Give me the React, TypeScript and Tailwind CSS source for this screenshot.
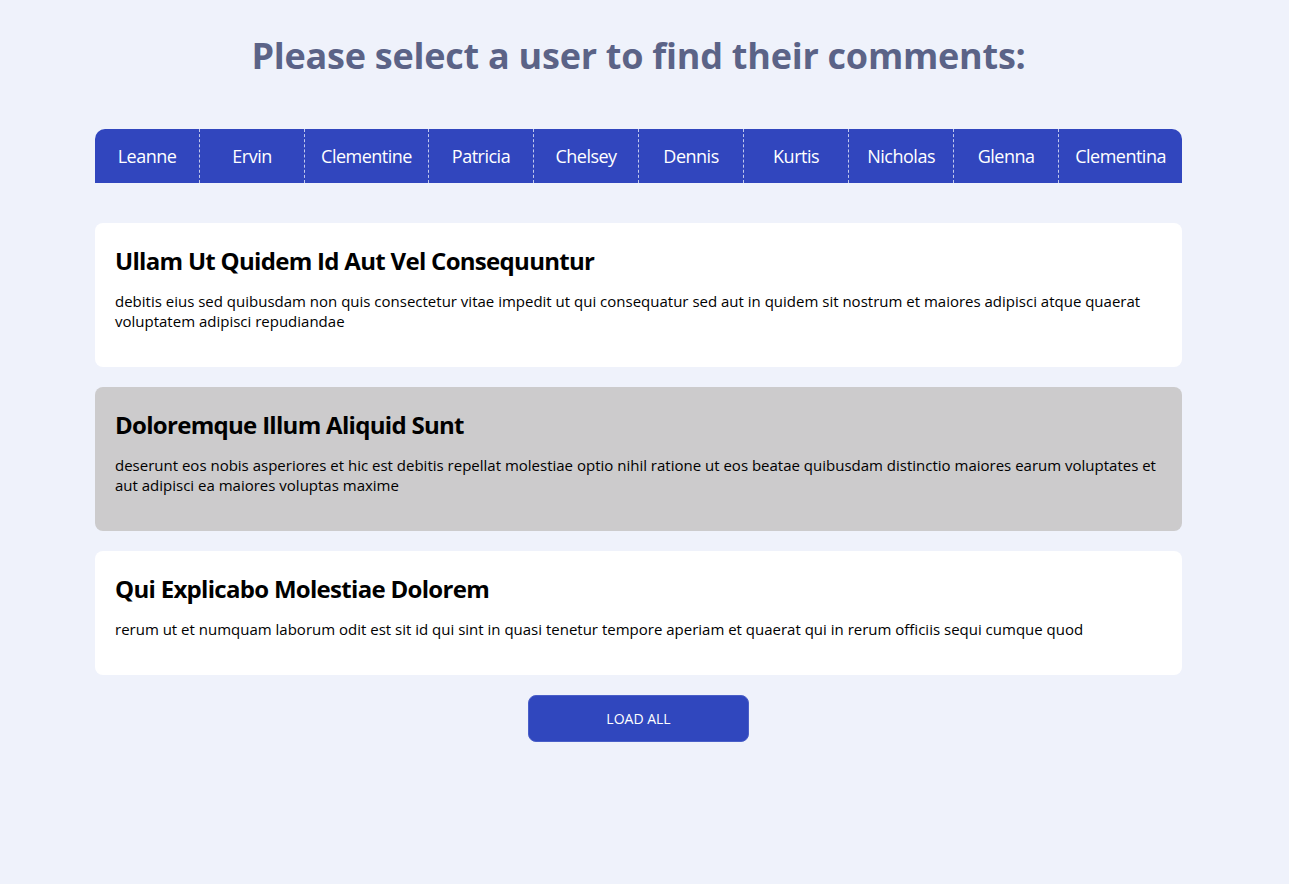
const users = [
  "Leanne",
  "Ervin",
  "Clementine",
  "Patricia",
  "Chelsey",
  "Dennis",
  "Kurtis",
  "Nicholas",
  "Glenna",
  "Clementina",
];

const comments = [
  {
    title: "Ullam Ut Quidem Id Aut Vel Consequuntur",
    body: "debitis eius sed quibusdam non quis consectetur vitae impedit ut qui consequatur sed aut in quidem sit nostrum et maiores adipisci atque quaerat voluptatem adipisci repudiandae",
    highlighted: false,
  },
  {
    title: "Doloremque Illum Aliquid Sunt",
    body: "deserunt eos nobis asperiores et hic est debitis repellat molestiae optio nihil ratione ut eos beatae quibusdam distinctio maiores earum voluptates et aut adipisci ea maiores voluptas maxime",
    highlighted: true,
  },
  {
    title: "Qui Explicabo Molestiae Dolorem",
    body: "rerum ut et numquam laborum odit est sit id qui sint in quasi tenetur tempore aperiam et quaerat qui in rerum officiis sequi cumque quod",
    highlighted: false,
  },
];

export default function App() {
  return (
    <div className="min-h-screen bg-[#eff2fb] pt-8 pr-3 font-['Open_Sans','Liberation_Sans',sans-serif]">
      <h1 className="text-center text-[36px] font-bold leading-[48px] tracking-[-0.25px] text-[#5b6387]">
        Please select a user to find their comments:
      </h1>

      <div className="mx-auto mt-[49px] w-[1087px]">
        <nav className="flex h-[54px] overflow-hidden rounded-t-[10px] bg-[#3146be]">
          {users.map((name, i) => (
            <button
              key={name + i}
              type="button"
              className={`flex flex-1 items-center justify-center whitespace-nowrap px-4 text-[18px] tracking-[-0.5px] text-white ${
                i > 0 ? "border-l border-dashed border-white/70" : ""
              }`}
            >
              {name}
            </button>
          ))}
        </nav>

        <div className="mt-10 flex flex-col gap-5">
          {comments.map((c) => (
            <div
              key={c.title}
              className={`rounded-lg px-5 pt-[22px] pb-9 ${c.highlighted ? "bg-[#cccbcc]" : "bg-white"}`}
            >
              <h2 className="text-[24px] font-bold leading-8 tracking-[-0.7px] text-black">{c.title}</h2>
              <p className="mt-[14px] text-[15px] leading-5 text-black">{c.body}</p>
            </div>
          ))}
        </div>

        <div className="mt-5 flex justify-center">
          <button
            type="button"
            className="h-[47px] w-[221px] rounded-lg border border-[#4a5fc8] bg-[#3047be] text-[14px] uppercase text-white"
          >
            Load All
          </button>
        </div>
      </div>
    </div>
  );
}
